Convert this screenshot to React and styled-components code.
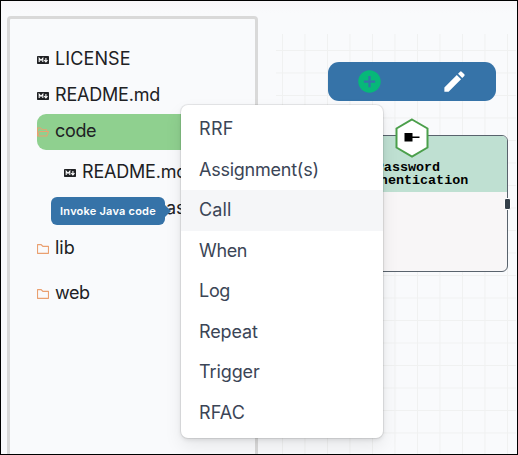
import React from "react";
import styled, { createGlobalStyle } from "styled-components";
import { MdAddCircle, MdEdit } from "react-icons/md";
import { AiOutlineFolder, AiOutlineFolderOpen } from "react-icons/ai";

const GlobalStyle = createGlobalStyle`
  * { box-sizing: border-box; }
  body { margin: 0; overflow: hidden; }
`;

const Shell = styled.main`
  position: relative;
  display: flex;
  width: 518px;
  height: 455px;
  border: 1px solid #000;
  background: linear-gradient(#f8f6f9, #f9fafc 12px);
  font-family: Inter, "Liberation Sans", sans-serif;
  overflow: hidden;
`;

const Sidebar = styled.aside`
  flex: none;
  width: 251px;
  height: 460px;
  margin: 15px 18px 0 6px;
  padding: 23px 0 0 27px;
  border: 3px solid #d9d9d9;
  border-radius: 4px;
`;

const TreeRow = styled.div`
  display: flex;
  align-items: center;
  gap: 6px;
  height: 36px;
  margin-top: ${(p) => p.$space || 0}px;
  margin-left: ${(p) => p.$indent || 0}px;
  padding-bottom: 3px;
  border-radius: 9px 0 0 9px;
  background: ${(p) => (p.$active ? "#8fd08f" : "transparent")};
  color: #202124;
  font-size: 18px;
  letter-spacing: ${(p) => p.$track || 0}px;
  white-space: nowrap;

  svg {
    flex: none;
    width: 12px;
    height: ${(p) => (p.$folder ? 10 : 8)}px;
    margin-top: 3px;
    color: ${(p) => (p.$folder ? "#eaa070" : "#202124")};
  }
`;

const Canvas = styled.section`
  position: relative;
  flex: none;
  width: 240px;
  height: 420px;
  margin-top: 33px;
  padding: 28px 0 0 52px;
  background-image:
    linear-gradient(90deg, #f0f1f1 1.3px, transparent 1.3px),
    linear-gradient(#f0f1f1 1.3px, transparent 1.3px);
  background-size: 22.5px 22.5px;
  background-position: 6px 0, 0 16px;
`;

const Toolbar = styled.div`
  display: flex;
  align-items: center;
  gap: 58px;
  width: 168px;
  height: 39px;
  padding-left: 28px;
  border-radius: 11px;
  background: #3673a8;
`;

const ToolButton = styled.button`
  display: flex;
  padding: 0;
  border: 0;
  background: none;
  color: ${(p) => p.$color};
  svg { width: 27px; height: 27px; }
`;

const NodeCard = styled.article`
  position: absolute;
  left: 40px;
  top: 101px;
  width: 192px;
  height: 137px;
  border: 1px solid #59636d;
  border-radius: 6px;
  background: #f8f6f7;
`;

const NodeHeader = styled.h2`
  height: 56px;
  margin: 0;
  padding: 25px 0 0;
  border-radius: 5px 5px 0 0;
  background: #bfe0d2;
  color: #000;
  font: bold 13.4px/13px "Liberation Mono", monospace;
  text-align: center;
  white-space: pre;
`;

const Badge = styled.svg`
  position: absolute;
  left: 78px;
  top: -18px;
  width: 34px;
  height: 40px;
`;

const Port = styled.span`
  position: absolute;
  right: -4px;
  top: 62px;
  width: 7px;
  height: 12px;
  border: 1px solid #fff;
  border-radius: 2px;
  background: #343f49;
`;

const Menu = styled.ul`
  position: absolute;
  left: 180px;
  top: 104px;
  width: 202px;
  height: 333px;
  margin: 0;
  padding: 4px 0;
  border-radius: 7px;
  background: #fff;
  box-shadow: 0 0 0 1px rgba(0, 0, 0, 0.07), 0 2px 4px rgba(0, 0, 0, 0.1), 0 8px 18px rgba(0, 0, 0, 0.08);
  list-style: none;
`;

const MenuItem = styled.li`
  display: flex;
  align-items: center;
  height: 40.5px;
  padding: 0 0 1px 18px;
  background: ${(p) => (p.$active ? "#f5f6f8" : "transparent")};
  color: #3b4556;
  font-size: 18px;
  letter-spacing: ${(p) => p.$track || 0}px;
`;

const Tooltip = styled.div`
  position: absolute;
  left: 50px;
  top: 196px;
  display: flex;
  align-items: center;
  justify-content: center;
  width: 114px;
  height: 28px;
  border-radius: 6px;
  background: #3673a8;
  color: #fff;
  font-size: 11px;
  font-weight: 600;
  letter-spacing: 0.22px;
  white-space: nowrap;

  &::after {
    content: "";
    position: absolute;
    left: 100%;
    top: 8px;
    border: 6px solid transparent;
    border-left: 6px solid #3673a8;
    border-right: 0;
  }
`;

const MarkdownIcon = () => (
  <svg viewBox="0 0 12 8">
    <rect width="12" height="8" rx="0.7" fill="currentColor" />
    <path d="M2.2 6V2.2L4 4.3 5.8 2.2V6M8.9 2V5.4M7.3 4.2 8.9 5.9 10.5 4.2" fill="none" stroke="#fff" strokeWidth="1.1" />
  </svg>
);

const FolderIcon = () => <AiOutlineFolder viewBox="112 184 800 656" />;
const FolderOpenIcon = () => <AiOutlineFolderOpen viewBox="64 184 896 656" />;

const entries = [
  ["RRF", 0.3], ["Assignment(s)", -0.24], ["Call", 0.1], ["When", -0.35],
  ["Log", -0.3], ["Repeat", -0.1], ["Trigger", -0.1], ["RFAC", 0.1],
];

export default function App() {
  return (
    <Shell>
      <GlobalStyle />
      <Sidebar>
        <TreeRow $track={0.1}><MarkdownIcon /><span>LICENSE</span></TreeRow>
        <TreeRow $track={-0.2}><MarkdownIcon /><span>README.md</span></TreeRow>
        <TreeRow $active $folder $track={-0.35}><FolderOpenIcon /><span>code</span></TreeRow>
        <TreeRow $indent={27} $space={5} $track={-0.2}><MarkdownIcon /><span>README.md</span></TreeRow>
        <TreeRow $indent={129}><span>as</span></TreeRow>
        <TreeRow $folder $space={4}><FolderIcon /><span>lib</span></TreeRow>
        <TreeRow $folder $space={9} $track={-0.4}><FolderIcon /><span>web</span></TreeRow>
      </Sidebar>
      <Canvas>
        <Toolbar>
          <ToolButton $color="#07b879" aria-label="Add"><MdAddCircle /></ToolButton>
          <ToolButton $color="#fff" aria-label="Edit"><MdEdit /></ToolButton>
        </Toolbar>
        <NodeCard>
          <NodeHeader>{"Password \nAuthentication"}</NodeHeader>
          <Badge viewBox="0 0 34 40">
            <path d="M17 1.5 32.5 10.5V29.5L17 38.5 1.5 29.5V10.5Z" fill="#fff" stroke="#4b9f4b" strokeWidth="2" />
            <path d="M9.5 15h8v3.5h7v1.5h-7v3.5h-8Z" fill="#000" />
          </Badge>
          <Port />
        </NodeCard>
      </Canvas>
      <Menu>
        {entries.map(([label, track]) => (
          <MenuItem key={label} $active={label === "Call"} $track={track}>{label}</MenuItem>
        ))}
      </Menu>
      <Tooltip>Invoke Java code</Tooltip>
    </Shell>
  );
}
